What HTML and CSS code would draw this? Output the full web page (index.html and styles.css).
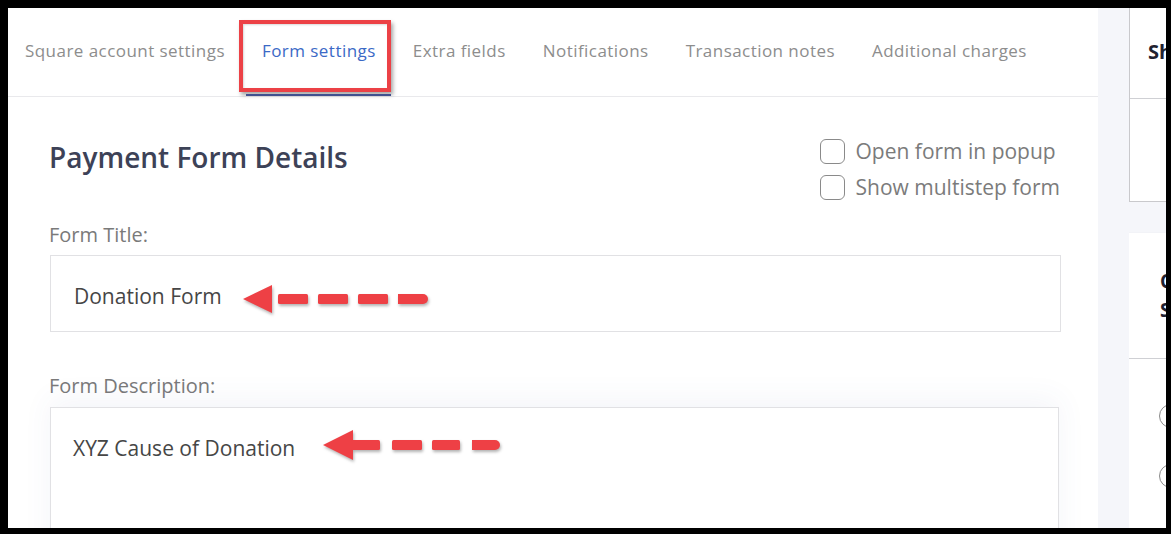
FILE: index.html
```html
<!DOCTYPE html>
<html lang="en">
<head>
<meta charset="utf-8">
<title>Form settings</title>
<link rel="stylesheet" href="styles.css">
</head>
<body>
<div class="screen">
  <div class="layout">
    <main class="main">
      <nav class="tabs">
        <span class="tab">Square account settings</span>
        <span class="tab active">Form settings<span class="highlight"></span></span>
        <span class="tab">Extra fields</span>
        <span class="tab">Notifications</span>
        <span class="tab">Transaction notes</span>
        <span class="tab">Additional charges</span>
      </nav>
      <section class="content">
        <div class="head-row">
          <h1 class="title">Payment Form Details</h1>
          <div class="checks">
            <label class="check"><span class="box"></span>Open form in popup</label>
            <label class="check"><span class="box"></span>Show multistep form</label>
          </div>
        </div>
        <div class="field-label first">Form Title:</div>
        <div class="input">
          <span>Donation Form</span>
          <svg class="arrow arrow-one" width="190" height="34" viewBox="0 0 190 34">
            <polygon points="2,17 31,3 31,31" />
            <rect x="37" y="12" width="30" height="10" rx="1.5" />
            <rect x="77" y="12" width="30" height="10" rx="1.5" />
            <rect x="117" y="12" width="30" height="10" rx="1.5" />
            <path d="M157 12 H182 A5 5 0 0 1 182 22 H157 Z" />
          </svg>
        </div>
        <div class="field-label second">Form Description:</div>
        <div class="textarea">
          <span>XYZ Cause of Donation</span>
          <svg class="arrow arrow-two" width="182" height="36" viewBox="0 0 182 36">
            <polygon points="2,17 32,2 32,32" />
            <rect x="30" y="12" width="29" height="10" rx="1.5" />
            <rect x="71" y="12" width="30" height="10" rx="1.5" />
            <rect x="111" y="12" width="28" height="10" rx="1.5" />
            <path d="M151 12 H174 A5 5 0 0 1 174 22 H151 Z" />
          </svg>
        </div>
      </section>
    </main>
    <aside class="side">
      <div class="card card-top">
        <div class="card-head">Shortcode</div>
      </div>
      <div class="card card-second">
        <div class="card-head tall">Customer<br>Settings</div>
        <div class="radio-row"><span class="radio"></span></div>
        <div class="radio-row"><span class="radio"></span></div>
      </div>
    </aside>
  </div>
</div>
</body>
</html>
```

FILE: styles.css
```css
* {
  box-sizing: border-box;
}

html, body {
  margin: 0;
  padding: 0;
  background: #000;
}

body {
  font-family: "Open Sans", "Noto Sans", sans-serif;
  width: 1171px;
  height: 534px;
  overflow: hidden;
}

.screen {
  width: 1171px;
  height: 534px;
  padding: 8px 5px 6px 8px;
  background: #000;
}

.layout {
  display: flex;
  height: 100%;
  gap: 31px;
  background: #f5f6fa;
  overflow: hidden;
}

.main {
  width: 1090px;
  flex: none;
  background: #fff;
  display: flex;
  flex-direction: column;
  overflow: hidden;
}

/* Tabs */
.tabs {
  display: flex;
  gap: 37px;
  height: 89px;
  flex: none;
  padding: 0 0 3px 17px;
  align-items: center;
  border-bottom: 1px solid #e9e9ec;
}

.tab {
  font-size: 17px;
  letter-spacing: 0.45px;
  color: #8d8d8d;
  white-space: nowrap;
  position: relative;
}

.tab.active {
  color: #3b69c6;
}

.tab.active::after {
  content: "";
  position: absolute;
  left: -16px;
  right: -15px;
  top: 55px;
  height: 2px;
  background: #41508f;
}

.highlight {
  position: absolute;
  left: -23px;
  right: -15px;
  top: -19px;
  height: 72px;
  border: 4px solid #ec4146;
  box-shadow: 2px 3px 4px rgba(0, 0, 0, 0.35), inset 1px 1px 2px rgba(0, 0, 0, 0.15);
}

/* Content */
.content {
  padding: 36px 37px 0 41px;
  flex: 1;
}

.head-row {
  display: flex;
  justify-content: space-between;
  align-items: flex-start;
}

.title {
  margin: 5px 0 0 0;
  font-size: 28px;
  font-weight: 600;
  color: #3d4257;
  line-height: 39px;
}

.checks {
  display: flex;
  flex-direction: column;
  margin-right: 1px;
}

.check {
  display: flex;
  align-items: center;
  height: 36px;
  font-size: 21px;
  color: #7b7b7b;
  gap: 11px;
}

.box {
  width: 25px;
  height: 25px;
  border: 1px solid #8a8a8a;
  border-radius: 6px;
  background: #fff;
  flex: none;
}

.field-label {
  font-size: 20px;
  color: #7a7a7a;
  line-height: 27px;
}

.field-label.first {
  margin-top: 16px;
  margin-bottom: 7px;
}

.field-label.second {
  margin-top: 40px;
  margin-bottom: 8px;
}

.input {
  position: relative;
  height: 77px;
  margin-left: 1px;
  border: 1px solid #e1e1e4;
  display: flex;
  align-items: center;
  padding: 4px 0 0 23px;
  font-size: 21px;
  color: #464646;
}

.textarea {
  position: relative;
  height: 160px;
  margin: 0 2px 0 1px;
  border: 1px solid #e1e1e4;
  padding: 26px 0 0 22px;
  font-size: 21px;
  color: #464646;
  line-height: 28px;
  box-shadow: 0 -8px 28px rgba(60, 80, 160, 0.06);
  background: #fff;
}

.arrow {
  position: absolute;
  fill: #ee4045;
  filter: drop-shadow(1px 2px 1.5px rgba(0, 0, 0, 0.3));
}

.arrow-one {
  left: 190px;
  top: 26px;
}

.arrow-two {
  left: 270px;
  top: 20px;
}

/* Side */
.side {
  width: 37px;
  flex: none;
  display: flex;
  flex-direction: column;
  gap: 31px;
  overflow: hidden;
}

.card {
  background: #fff;
  width: 100%;
}

.card-top {
  height: 194px;
  border-left: 1px solid #c9c9cc;
  border-bottom: 1px solid #c9c9cc;
}

.card-head {
  height: 91px;
  border-bottom: 1px solid #cfd0d4;
  padding: 30px 0 0 18px;
  font-size: 20px;
  font-weight: 700;
  color: #1f2230;
  white-space: nowrap;
  overflow: hidden;
}

.card-second {
  flex: 1;
  box-shadow: -1px 0 2px rgba(0, 0, 0, 0.04);
}

.card-head.tall {
  height: 126px;
  padding: 34px 0 0 31px;
  font-size: 19px;
  line-height: 29px;
}

.radio-row {
  height: 36px;
  padding-left: 30px;
  display: flex;
  align-items: center;
}

.card-head.tall + .radio-row {
  margin-top: 39px;
}

.radio-row + .radio-row {
  margin-top: 24px;
}

.radio {
  width: 24px;
  height: 24px;
  border: 1px solid #8a8a8a;
  border-radius: 50%;
  flex: none;
}
```
